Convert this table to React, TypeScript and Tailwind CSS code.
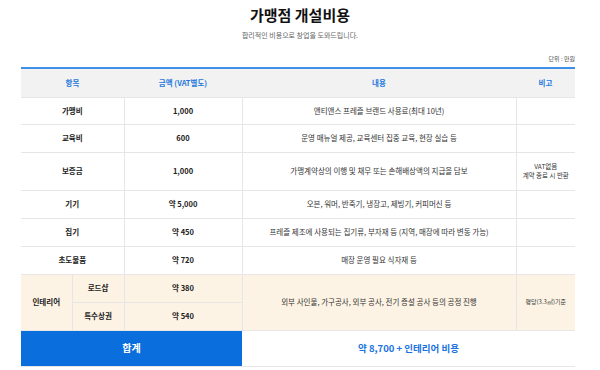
const rows = [
  { name: "가맹비", amount: "1,000", desc: "앤티앤스 프레즐 브랜드 사용료(최대 10년)", note: null as string[] | null, h: "h-[27px]" },
  { name: "교육비", amount: "600", desc: "운영 매뉴얼 제공, 교육센터 집중 교육, 현장 실습 등", note: null, h: "h-[28px]" },
  { name: "보증금", amount: "1,000", desc: "가맹계약상의 이행 및 채무 또는 손해배상액의 지급을 담보", note: ["VAT없음", "계약 종료 시 반환"], h: "h-[38px]" },
  { name: "기기", amount: "약 5,000", desc: "오븐, 워머, 반죽기, 냉장고, 제빙기, 커피머신 등", note: null, h: "h-[28px]" },
  { name: "집기", amount: "약 450", desc: "프레즐 제조에 사용되는 집기류, 부자재 등 (지역, 매장에 따라 변동 가능)", note: null, h: "h-[28px]" },
  { name: "초도물품", amount: "약 720", desc: "매장 운영 필요 식자재 등", note: null, h: "h-[28px]" },
];

const cell = "border border-[#e6e6e6] text-center align-middle";

export default function App() {
  return (
    <div className="w-[600px] h-[370px] overflow-hidden bg-white font-['Noto_Sans_CJK_KR','Noto_Sans',sans-serif] text-[#222]">
      <h1 className="pt-[5px] text-center text-[15px] font-bold leading-[20px] text-[#111]">가맹점 개설비용</h1>
      <p className="mt-[5px] text-center text-[7px] leading-[10px] text-[#666]">합리적인 비용으로 창업을 도와드립니다.</p>

      <div className="ml-[21px] w-[554px]">
        <p className="mt-[15px] text-right text-[6px] leading-[8px] text-[#555]">단위 : 만원</p>
        <table className="mt-[4px] w-full table-fixed border-collapse text-[7.5px] leading-[10px]">
          <colgroup>
            <col className="w-[51px]" />
            <col className="w-[52px]" />
            <col className="w-[118px]" />
            <col className="w-[274px]" />
            <col className="w-[59px]" />
          </colgroup>
          <thead>
            <tr className="h-[29px] border-t-2 border-t-[#3d8fe8] bg-[#f2f2f2] font-bold text-[#1f78dd]">
              <th colSpan={2} className="border-x-0 border-b border-[#e6e6e6] font-bold">항목</th>
              <th className="border-b border-[#e6e6e6] font-bold">금액 (VAT별도)</th>
              <th className="border-b border-[#e6e6e6] font-bold">내용</th>
              <th className="border-b border-[#e6e6e6] font-bold">비고</th>
            </tr>
          </thead>
          <tbody>
            {rows.map((r) => (
              <tr key={r.name} className={r.h}>
                <td colSpan={2} className={`${cell} border-l-0 font-bold`}>{r.name}</td>
                <td className={`${cell} font-bold`}>{r.amount}</td>
                <td className={`${cell} text-[#333]`}>{r.desc}</td>
                <td className={`${cell} border-r-0 text-[6.5px] leading-[9px] text-[#333]`}>
                  {r.note && r.note.map((n) => <div key={n}>{n}</div>)}
                </td>
              </tr>
            ))}
            <tr className="h-[28px] bg-[#fdf3e4]">
              <td rowSpan={2} className={`${cell} border-l-0 font-bold`}>인테리어</td>
              <td className={`${cell} font-bold`}>로드샵</td>
              <td className={`${cell} font-bold`}>약 380</td>
              <td rowSpan={2} className={`${cell} text-[#333]`}>외부 사인물, 가구공사, 외부 공사, 전기 증설 공사 등의 공정 진행</td>
              <td rowSpan={2} className={`${cell} border-r-0 text-[6px] text-[#333]`}>평당(3.3㎡)기준</td>
            </tr>
            <tr className="h-[28px] bg-[#fdf3e4]">
              <td className={`${cell} font-bold`}>특수상권</td>
              <td className={`${cell} font-bold`}>약 540</td>
            </tr>
            <tr className="h-[36px]">
              <td colSpan={3} className="border-b border-[#e6e6e6] bg-[#0a6fdc] text-center text-[10px] font-bold text-white">합계</td>
              <td colSpan={2} className="border-b border-[#e6e6e6] text-center text-[9.5px] font-bold text-[#1a73e0]">약 8,700 + 인테리어 비용</td>
            </tr>
          </tbody>
        </table>
      </div>
    </div>
  );
}
